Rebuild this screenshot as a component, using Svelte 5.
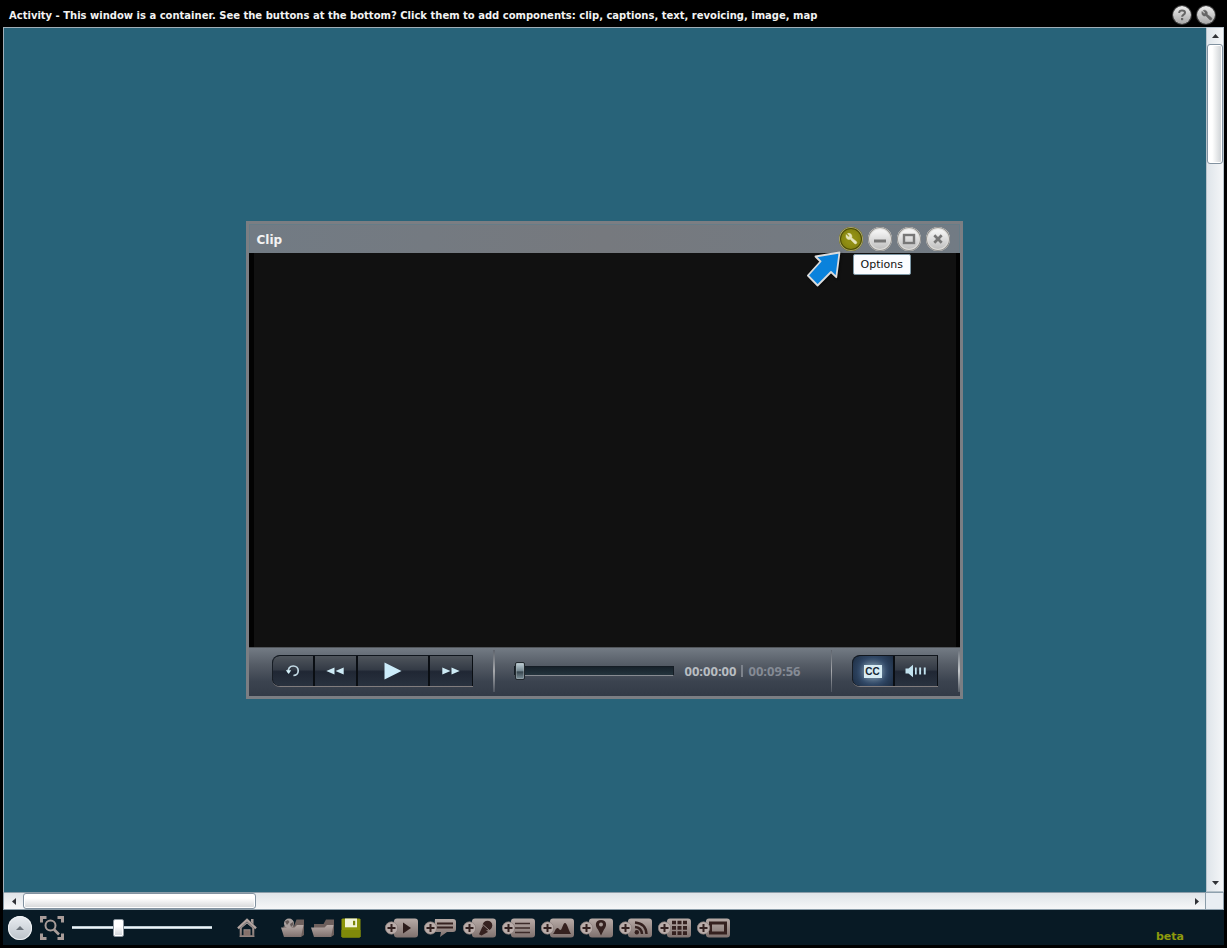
<script>
  let zoom = $state(32);
  let position = $state(0);
  let captionsOn = $state(true);

  const tools = [
    { id: 'clip', label: 'Add clip' },
    { id: 'captions', label: 'Add captions' },
    { id: 'revoicing', label: 'Add revoicing' },
    { id: 'text', label: 'Add text' },
    { id: 'image', label: 'Add image' },
    { id: 'map', label: 'Add map' },
    { id: 'feed', label: 'Add feed' },
    { id: 'grid', label: 'Add grid' },
    { id: 'frame', label: 'Add container' }
  ];
</script>

{#snippet wrench()}
  <path d="M3.2 3.6 5.6 6 6.6 5 4.5 2.6C6.4 1.8 8.6 2.8 8.9 5c.1.7 0 1.200-.2 1.700l4.600 3.700c1.400 1.300-.4 3.400-1.900 2.100L7.300 8.300C5.300 9.200 2.300 7.800 3.200 3.600Z" />
{/snippet}

<div class="app">
  <header class="topbar">
    <h1>Activity - This window is a container. See the buttons at the bottom? Click them to add components: clip, captions, text, revoicing, image, map</h1>
    <div class="top-actions">
      <button class="round small" aria-label="Help">
        <svg width="12" height="14" viewBox="0 0 12 14"><path d="M3.200 5C3.200 3.200 4.300 2.500 6 2.500s3 .8 3 2.300c0 1.900-2.900 1.900-2.900 4" fill="none" stroke="#666" stroke-width="2" /><rect x="5" y="10" width="2.200" height="2.200" fill="#666" /></svg>
      </button>
      <button class="round small" aria-label="Settings">
        <svg width="15" height="15" viewBox="0 0 16 16" fill="#666" stroke="#666" stroke-width=".6">{@render wrench()}</svg>
      </button>
    </div>
  </header>

  <main class="workspace">
    <div class="canvas">
      <section class="window" aria-label="Clip">
        <div class="titlebar">
          <h2>Clip</h2>
          <div class="window-actions">
            <span class="anchor">
              <button class="round active" aria-label="Options" aria-describedby="options-tip">
                <svg width="16" height="16" viewBox="0 0 16 16" fill="#e6e5bd" stroke="#e6e5bd" stroke-width=".5">{@render wrench()}</svg>
              </button>
              <svg class="pointer" width="36" height="38" viewBox="0 0 36 38" aria-hidden="true">
                <path d="M32.500 1.500 8.500 5.500 13.500 10.500.9 24.500l9.700 10L24 21l5.300 5.200Z" fill="#0a82dc" stroke="#dcdcdc" stroke-width="1.800" stroke-linejoin="round" />
              </svg>
              <span class="tooltip" id="options-tip" role="tooltip">Options</span>
            </span>
            <button class="round" aria-label="Minimize">
              <svg width="14" height="14" viewBox="0 0 14 14"><path d="M1 9h12" stroke="#777" stroke-width="3" /></svg>
            </button>
            <button class="round" aria-label="Maximize">
              <svg width="14" height="14" viewBox="0 0 14 14"><rect x="2" y="3" width="10" height="8" fill="none" stroke="#777" stroke-width="2.400" /></svg>
            </button>
            <button class="round" aria-label="Close">
              <svg width="14" height="14" viewBox="0 0 14 14"><path d="m3.300 3.300 7.400 7.400m0-7.400-7.400 7.400" stroke="#777" stroke-width="2.700" /></svg>
            </button>
          </div>
        </div>

        <div class="video"></div>

        <div class="controls">
          <div class="keys">
            <button aria-label="Replay">
              <svg width="16" height="14" viewBox="0 0 16 14"><path d="M3.500 8.500C2.500 4.500 5 2 8.300 2c3 0 4.900 2.100 4.900 4.800 0 2.600-1.900 4.700-4.800 4.700" fill="none" stroke="#c2d9e4" stroke-width="1.700" /><path d="M.8 6.300h5.400L3.700 10Z" fill="#d5f2fa" /></svg>
            </button>
            <button aria-label="Rewind">
              <svg width="18" height="8" viewBox="0 0 18 8" fill="#cdeaf5"><path d="M8.500.5v7L.3 4ZM17.700.5v7L9.500 4Z" /></svg>
            </button>
            <button class="wide" aria-label="Play">
              <svg width="18" height="18" viewBox="0 0 18 18"><path d="M.5.5 17.500 9l-17 8.500Z" fill="#ccecfa" /></svg>
            </button>
            <button aria-label="Fast forward">
              <svg width="18" height="8" viewBox="0 0 18 8" fill="#cdeaf5"><path d="M.3.500 8.500 4 .3 7.500ZM9.500.500 17.700 4l-8.200 3.500Z" /></svg>
            </button>
          </div>
          <div class="progress">
            <input class="seek" type="range" min="0" max="596" bind:value={position} aria-label="Position" />
            <div class="time"><span>00:00:00</span><i></i><span class="total">00:09:56</span></div>
          </div>
          <div class="keys sound">
            <button class:lit={captionsOn} aria-label="Captions" onclick={() => (captionsOn = !captionsOn)}>
              <span class="cc">CC</span>
            </button>
            <button aria-label="Volume">
              <svg width="22" height="14" viewBox="0 0 22 14" fill="#c2e2ef"><path d="M.5 4.500h3L8 .8v12.400L3.500 9.500h-3Z" /><path d="M10 3.500h1.700v7H10ZM14.200 3.500h1.900v7h-1.900ZM18.800 3.500h1.900v7h-1.900Z" /></svg>
            </button>
          </div>
        </div>
      </section>
    </div>

    <div class="scroll vertical">
      <button aria-label="Scroll up"><svg width="7" height="4" viewBox="0 0 7 4"><path d="M0 4 3.500 0 7 4Z" /></svg></button>
      <div class="track"><div class="thumb"></div></div>
      <button aria-label="Scroll down"><svg width="7" height="4" viewBox="0 0 7 4"><path d="M0 0 3.500 4 7 0Z" /></svg></button>
    </div>
    <div class="scroll horizontal">
      <button aria-label="Scroll left"><svg width="4" height="7" viewBox="0 0 4 7"><path d="M4 0 0 3.500 4 7Z" /></svg></button>
      <div class="track"><div class="thumb"></div></div>
      <button aria-label="Scroll right"><svg width="4" height="7" viewBox="0 0 4 7"><path d="M0 0 4 3.500 0 7Z" /></svg></button>
    </div>
    <div class="corner"></div>
  </main>

  <footer class="toolbar">
    <svg width="0" height="0" class="defs" aria-hidden="true">
      <linearGradient id="clay" x1="0" y1="0" x2="0" y2="1"><stop offset="0" stop-color="#b8aba7" /><stop offset="1" stop-color="#7f716e" /></linearGradient>
    </svg>
    <div class="view">
      <button class="round menu" aria-label="Menu">
        <svg width="8" height="4" viewBox="0 0 8 4"><path d="M0 4 4 0l4 4Z" fill="#6a727a" /></svg>
      </button>
      <button class="icon" aria-label="Zoom to fit">
        <svg width="24" height="24" viewBox="0 0 24 24" fill="none" stroke="#a89c99"><path d="M1.500 6.500v-5h5m11 0h5v5m0 11v5h-5m-11 0h-5v-5" stroke-width="3" /><circle cx="10.500" cy="9.500" r="5" stroke-width="2" /><path d="m14 13.500 5 5" stroke-width="2.600" /></svg>
      </button>
      <input class="zoom" type="range" min="0" max="100" bind:value={zoom} aria-label="Zoom" />
    </div>
    <button class="icon" aria-label="Home">
      <svg width="20" height="20" viewBox="0 0 20 20"><path d="M2.700 10.500V19H8v-6h4v6h5.300v-8.500L10 4Z" fill="url(#clay)" /><path d="M4.800 10v7.300h1.700v-6h7v6h1.700V10L10 5.500Z" fill="#081a25" /><path d="M7.300 12.300h5.400V19H7.300Z" fill="#84706a" /><path d="m1 10.300 9-8.500 9 8.500" fill="none" stroke="#b2a39f" stroke-width="2.400" /><path d="M14 1h2.500v5.500L14 4Z" fill="#a89c99" /><path d="M2.700 18.300h14.600" stroke="#93837f" stroke-width="1.400" /></svg>
    </button>
    <div class="files">
      <button class="icon" aria-label="Open from web">
        <svg width="24" height="20" viewBox="0 0 24 20"><path d="M2.500 8h10.500L15.500 1.500H23V17l-3 2H3Z" fill="#6d5f5c" /><circle cx="8" cy="5.500" r="5" fill="#aaa09e" /><path d="M4 3.500 7 2l1.500 2L6 7Zm5 2.500 3-2 .5 2.500-2.500 2.500Z" fill="#655a58" /><path d="M0 9.500h13.500L16 7h6.500L20 19H3Z" fill="url(#clay)" /></svg>
      </button>
      <button class="icon" aria-label="Open">
        <svg width="24" height="20" viewBox="0 0 24 20"><path d="M3 9V6h9.500L15 1.500h8V17l-3 2H3Z" fill="#6d5f5c" /><path d="M0 9.500h13.500L16 7h6.500L20 19H3Z" fill="url(#clay)" /></svg>
      </button>
      <button class="icon" aria-label="Save">
        <svg width="20" height="20" viewBox="0 0 20 20"><path d="M1.500.5h17l1 1v17l-1 1h-17l-1-1v-17Z" fill="#8d960a" /><path d="M.5 12h19v6.500l-1 1h-17l-1-1Z" fill="#7f890a" /><path d="M4 .5h12v8.800H4Z" fill="#f2f4d9" /><path d="M12 2.800h2.200v4.400H12Z" fill="#7c8609" /></svg>
      </button>
    </div>
    <div class="tools">
      {#each tools as tool (tool.id)}
        <button class="icon" aria-label={tool.label}>
          <svg width="34" height="20" viewBox="0 0 34 20">
            {#if tool.id === 'captions'}
              <path d="M11 1h18q3 0 3 3v7q0 3-3 3h-6l-7 5 1-5h-7Z" fill="url(#clay)" />
              <path d="M13 5.500h16M13 9.500h16" stroke="#35211f" stroke-width="2" />
            {:else}
              <rect x="9" y=".5" width="24" height="19" rx="3" fill="url(#clay)" />
              <g transform="translate(1)">
                {#if tool.id === 'clip'}
                  <path d="m17 4.500 8 5.500-8 5.500Z" fill="#2c1c1b" />
                {:else if tool.id === 'revoicing'}
                  <g fill="#35211f"><circle cx="23.500" cy="7.500" r="4.800" /><path d="m18.500 8.500 5.500 5.500-6.500 3.500-2.500-1.300Z" /></g><path d="m18.800 6.500 6.500 5.800" stroke="#9b8d89" />
                {:else if tool.id === 'text'}
                  <path d="M12 5.500h15M12 10h15M12 14.500h15" stroke="#3c2b29" stroke-width="1.700" />
                {:else if tool.id === 'image'}
                  <path d="M11 16c2-2 2.500-6 4.500-6 1.200 0 1.800 2 3 2 1.500 0 2.500-7 4.500-7 2 0 4 8.500 6 11Z" fill="#35211f" />
                {:else if tool.id === 'map'}
                  <path d="M20 2c-6 0-6.300 6-3 9.500l3 6 3-6C26.300 8 26 2 20 2Z" fill="#35211f" /><circle cx="20" cy="6.500" r="2" fill="#a99c98" />
                {:else if tool.id === 'feed'}
                  <g fill="none" stroke="#35211f" stroke-width="2.400"><path d="M15 9q6.500.5 7 7M15 4.500q11 1 11.500 11.500" /></g><circle cx="16.800" cy="14.300" r="2.200" fill="#35211f" />
                {:else if tool.id === 'grid'}
                  <path d="M13 4.500h15M13 9.800h15M13 15.100h15" stroke="#35211f" stroke-width="3.700" stroke-dasharray="4 1.500" />
                {:else}
                  <rect x="12.500" y="5" width="15" height="10" fill="none" stroke="#35211f" stroke-width="3" />
                {/if}
              </g>
            {/if}
            <circle cx="6.500" cy="10" r="6.200" fill="#b9aca9" stroke="#8a7d7a" stroke-width=".7" />
            <path d="M6.500 6v8m-4-4h8" stroke="#32201f" stroke-width="2" />
          </svg>
        </button>
      {/each}
    </div>
    <span class="beta">beta</span>
  </footer>
</div>

<style>
  :global(body) { margin: 0; background: #000; }
  .app {
    box-sizing: border-box;
    height: 100vh;
    padding: 0 3px 3px;
    display: flex;
    flex-direction: column;
    overflow: hidden;
    background: #000;
    color: #f2f2f2;
    font-family: "DejaVu Sans", Verdana, sans-serif;
    font-size: 11px;
  }
  button {
    display: flex;
    align-items: center;
    justify-content: center;
    padding: 0;
    border: 0;
    background: none;
    font: inherit;
    cursor: pointer;
  }
  svg { display: block; flex: none; }
  .topbar {
    display: flex;
    align-items: center;
    justify-content: space-between;
    height: 27px;
    padding: 0 9px 0 6px;
  }
  h1 { margin: 0; padding-top: 4px; font-size: 10px; line-height: 15px; white-space: nowrap; }
  .top-actions { display: flex; gap: 6px; padding-top: 3px; }
  .round {
    width: 24px;
    height: 24px;
    border-radius: 50%;
    background: linear-gradient(#f2f2f2 20%, #b9b9b9);
    box-shadow: inset 0 0 0 1px #8f8e8c, inset 0 0 0 2px #dddcd9;
  }
  .round.small { width: 18px; height: 18px; background: linear-gradient(#ededed, #a8a8a8); box-shadow: 0 0 0 1px #77777788; }
  .round.active { background: radial-gradient(circle, #918f13 30%, #747309 100%); box-shadow: inset 0 0 0 1px #a9a56b, inset 0 0 0 2px #4d4d04; }
  .workspace {
    flex: 1;
    min-height: 0;
    display: grid;
    grid-template: 1fr 18px / 1fr 18px;
  }
  .canvas {
    display: flex;
    align-items: center;
    justify-content: center;
    min-width: 0;
    padding-right: 2px;
    background: #286379;
    border: solid #a0aeb7;
    border-width: 1px 0 0 1px;
  }
  .window { flex: 0 1 711px; border: 3px solid #7b7e83; background: #727c85; }
  .titlebar {
    box-sizing: border-box;
    height: 29px;
    display: flex;
    align-items: center;
    justify-content: space-between;
    padding: 0 9px 0 7px;
    border: solid #667c87;
    border-width: 1px 1px 0;
    background: linear-gradient(90deg, #727b84, #76797e 50%, #727b84);
  }
  h2 { margin: 0; padding-top: 2px; font-size: 12px; line-height: 16px; }
  .window-actions { display: flex; gap: 5px; }
  .anchor { position: relative; }
  .tooltip {
    position: absolute;
    z-index: 2;
    left: 14px;
    top: 27px;
    padding: 2px 7px;
    border: 1px solid #7e98a6;
    border-radius: 2px;
    background: #fbfcff;
    color: #111;
    line-height: 15px;
  }
  .pointer { position: absolute; z-index: 2; left: -32px; top: 24px; filter: drop-shadow(1px 1px 1px #0008); }
  .video { height: 394px; background: #111; border-left: 5px solid #020202; border-right: 4px solid #020202; }
  .controls {
    box-sizing: border-box;
    height: 49px;
    display: flex;
    align-items: center;
    padding: 0 0 2px 23px;
    border-top: 1px solid #52565b;
    background: linear-gradient(#737b84, #555c66 35%, #3b434f 70%, #333b47);
  }
  .keys { display: flex; height: 30px; border: 1px solid #10161d; border-width: 1px 0; border-bottom-color: #817d7e; border-radius: 8px 0 0 8px; overflow: hidden; background: #0a1017; }
  .keys button {
    box-sizing: border-box;
    width: 43px;
    background: linear-gradient(#4f555c, #343b46 45%, #202734 52%, #29323f);
    border-right: 2px solid #0a0e13;
  }
  .keys button:first-child { border-radius: 7px 0 0 7px; border-left: 1px solid #171d25; }
  .keys button:last-child { border-right: 1px solid #0a0e13; }
  .keys .wide { width: 72px; }
  .keys .lit { background: radial-gradient(circle, #5c7185 0 15%, #304765 55%, #1c2c41 100%); }
  .cc { width: 18px; height: 13px; background: #d8edf4; color: #172735; font: bold 10px/13px "Liberation Sans", sans-serif; text-align: center; box-shadow: 0 0 6px #afd2e888; }
  .progress {
    flex: 1;
    height: 42px;
    box-sizing: border-box;
    display: flex;
    align-items: center;
    gap: 10px;
    margin: 0 20px;
    padding: 0 30px 0 19px;
    border: 2px solid;
    border-width: 0 1px 0 2px;
    border-image: linear-gradient(#5a6069, #a6a8ac 50%, #4a515c) 1;
  }
  input[type='range'] { appearance: none; margin: 0; min-width: 0; background: none; }
  .seek { flex: 1; height: 20px; }
  .seek::-webkit-slider-runnable-track { box-sizing: border-box; height: 10px; border: 1px solid #151d25; border-bottom: 1px solid #878b91; background: linear-gradient(#17222b, #24343d); }
  .seek::-webkit-slider-thumb { appearance: none; box-sizing: border-box; width: 10px; height: 18px; margin-top: -5px; border: 1px solid #22292e; border-radius: 2px; background: linear-gradient(#c2d2d9, #72858e 50%, #36454d 55%, #7f929b); box-shadow: inset 0 0 0 1px #a4b0b577; }
  .time { display: flex; align-items: center; color: #b9bec2; font: bold 13px/16px "Open Sans", sans-serif; }
  .time i { width: 2px; height: 12px; margin: 0 5px; background: #7c828b; }
  .total { color: #858b95; }
  .sound { margin-right: 20px; }
  .controls::after { content: ''; width: 2px; height: 42px; background: linear-gradient(#6d747d, #c4c8cb 50%, #555c65); }
  .scroll { display: flex; border: 1px solid #8b9da9; box-sizing: border-box; fill: #303236; }
  .scroll button { flex: none; }
  .track { flex: 1; display: flex; min-width: 0; min-height: 0; }
  .thumb { box-sizing: border-box; border: 1px solid #8292a0; border-radius: 3px; box-shadow: inset 0 0 0 1px #fff; }
  .vertical { flex-direction: column; background: linear-gradient(90deg, #dfe5ea, #f4f6f8); border-color: #b7c3cb; }
  .vertical button { height: 16px; }
  .vertical .track { flex-direction: column; }
  .vertical .thumb { height: 14.400%; background: linear-gradient(90deg, #fff 30%, #ccd0d3); }
  .horizontal { background: linear-gradient(#dfe4e8, #f6f7f8); }
  .horizontal button:first-child { width: 19px; }
  .horizontal button { width: 16px; }
  .horizontal .thumb { width: 20%; background: linear-gradient(#fff 30%, #d4d6d8); }
  .corner { background: #e9eef3; border: solid #8fa1ae; border-width: 1px 1px 1px 0; }
  .toolbar { height: 35px; display: flex; align-items: center; gap: 24px; padding: 0 40px 0 5px; background: #081a25; }
  .defs { position: absolute; }
  .view { display: flex; align-items: center; gap: 8px; margin-right: 1px; }
  .round.menu { background: linear-gradient(#e9edf1, #bcc3ca); box-shadow: inset 0 0 0 1px #eef1f4; }
  .zoom { width: 140px; height: 20px; }
  .zoom::-webkit-slider-runnable-track { height: 3px; background: linear-gradient(#9fb5c0, #eef3f6 50%, #9fb5c0); }
  .zoom::-webkit-slider-thumb { appearance: none; box-sizing: border-box; width: 11px; height: 18px; margin-top: -7px; border: 1px solid #8a949d; border-radius: 2px; background: linear-gradient(#fff 40%, #cfd3d8); box-shadow: inset 0 0 0 1px #fff; }
  .files { display: flex; gap: 6px; }
  .tools { display: flex; gap: 5px; }
  .beta { margin-left: auto; padding-top: 18px; color: #8e9a0d; font-weight: bold; line-height: 16px; }
</style>
